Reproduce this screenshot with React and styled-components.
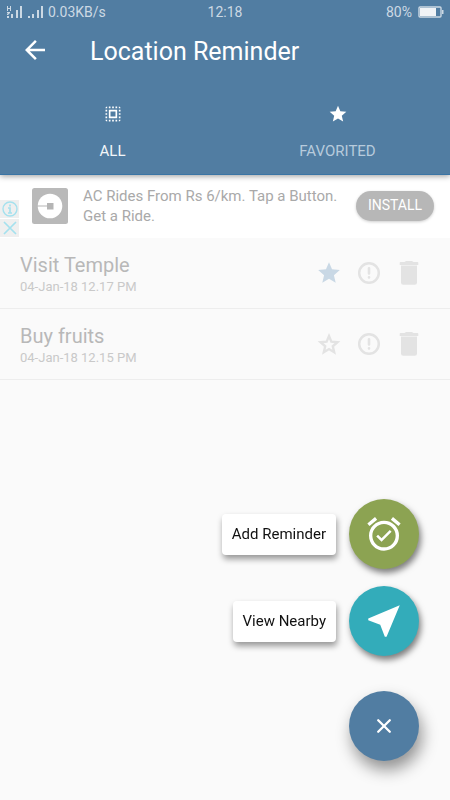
import React from "react";
import styled, { createGlobalStyle } from "styled-components";
import {
  MdArrowBack,
  MdSelectAll,
  MdStar,
  MdAlarmOn,
  MdNearMe,
} from "react-icons/md";

const Global = createGlobalStyle`
  *, *::before, *::after { box-sizing: border-box; }
  body { margin: 0; background: #fafafa; font-family: Roboto, "Noto Sans", sans-serif; }
  button { font: inherit; border: 0; padding: 0; background: none; cursor: pointer; }
  h1, h2, p, ul { margin: 0; padding: 0; font-weight: 400; }
  svg { display: block; flex: none; }
`;

const Screen = styled.div`
  min-height: 100vh;
  background: #fafafa;
`;

const Header = styled.header`
  position: relative;
  background: #517da2;
  border-bottom: 1px solid #3a75a5;
  box-shadow: 0 1px 6px rgba(0, 0, 0, 0.4);
`;

const StatusBar = styled.div`
  display: grid;
  grid-template-columns: 1fr auto 1fr;
  align-items: center;
  height: 24px;
  padding: 0 6px;
  font-size: 14px;
  line-height: 24px;
  color: #ccd9e4;
`;

const StatusGroup = styled.div`
  display: flex;
  align-items: center;
  justify-content: ${(p) => (p.$end ? "flex-end" : "flex-start")};
  gap: ${(p) => (p.$end ? "6px" : "4px")};
`;

const TitleBar = styled.div`
  display: flex;
  align-items: center;
  gap: 40px;
  height: 52px;
  padding: 0 20px;
  color: #fff;
`;

const BackButton = styled.button`
  color: #fff;
`;

const Title = styled.h1`
  padding-top: 3px;
  font-size: 25px;
  line-height: 32px;
`;

const Tabs = styled.nav`
  display: grid;
  grid-template-columns: 1fr 1fr;
`;

const Tab = styled.button`
  display: flex;
  flex-direction: column;
  align-items: center;
  gap: 17px;
  height: 98px;
  color: ${(p) => (p.$active ? "#f2f6f9" : "#b7cbdc")};
  && {
    padding-top: 28px;
    font-size: 15px;
    line-height: 20px;
  }
  svg { color: #fff; }
`;

const Ad = styled.section`
  display: flex;
  height: 63px;
  background: #fff;
`;

const AdMarks = styled.div`
  display: flex;
  flex-direction: column;
  justify-content: flex-end;
  gap: 1px;
  width: 19px;
  padding-bottom: 1px;
`;

const AdMark = styled.button`
  display: grid;
  place-items: center;
  height: 18px;
  && { background: #efefef; }
`;

const AdBody = styled.div`
  display: flex;
  flex: 1;
  align-items: flex-start;
  padding: 11px 16px 0 13px;
`;

const AdText = styled.p`
  flex: 1;
  margin-left: 15px;
  font-size: 15px;
  line-height: 20px;
  color: #a9a9a9;
`;

const InstallButton = styled.button`
  && {
    width: 78px;
    height: 30px;
    margin-top: 5px;
    border-radius: 15px;
    background: #b7b7b7;
    color: #fff;
    font-size: 14px;
    line-height: 28px;
    box-shadow: 0 1px 3px rgba(0, 0, 0, 0.2);
    padding-bottom: 2px;
  }
`;

const AppLogo = styled.svg`
  margin-top: 2px;
`;

const Reminders = styled.ul`
  list-style: none;
`;

const Reminder = styled.li`
  display: flex;
  align-items: center;
  justify-content: space-between;
  height: 71px;
  padding: 0 28px 0 20px;
  border-bottom: 1px solid #ededed;
`;

const ReminderText = styled.div`
  padding-top: 3px;
`;

const ReminderName = styled.h2`
  font-size: 20px;
  line-height: 24px;
  color: #b8b8b8;
`;

const ReminderTime = styled.p`
  font-size: 13px;
  line-height: 20px;
  color: #c9c9c9;
`;

const Actions = styled.div`
  display: flex;
  gap: 14px;
`;

const IconButton = styled.button`
  display: grid;
  place-items: center;
  width: 26px;
  height: 26px;
  color: ${(p) => (p.$on ? "#c9d8e5" : "#e3e3e3")};
`;

const SpeedDial = styled.div`
  position: fixed;
  right: 31px;
  bottom: 39px;
  display: flex;
  flex-direction: column;
  align-items: flex-end;
  gap: 17px;
`;

const DialItem = styled.div`
  display: flex;
  align-items: center;
  gap: 13px;
`;

const DialLabel = styled.label`
  padding: 10px;
  border-radius: 4px;
  background: #fff;
  color: #111;
  font-size: 15px;
  line-height: 21px;
  cursor: pointer;
  box-shadow: 1px 4px 6px rgba(0, 0, 0, 0.4);
`;

const Fab = styled.button`
  && {
    display: grid;
    place-items: center;
    width: 70px;
    height: 70px;
    border-radius: 50%;
    color: #fff;
    background: ${(p) => p.$color};
    margin-top: ${(p) => (p.$main ? "18px" : "0")};
    box-shadow: ${(p) =>
      p.$main ? "3px 9px 16px rgba(0, 0, 0, 0.42)" : "2px 4px 6px rgba(0, 0, 0, 0.5)"};
  }
`;

function SignalIcon({ network }) {
  return (
    <svg width="17" height="14" viewBox="0 0 17 14" fill="currentColor" aria-hidden="true">
      {network && <path d="M1 1h1v2h2V1h1v5H4V4H2v2H1zM1 7h3v1l-2 2H1V9l1-1H1z" />}
      <path d="M1 11h2v2H1zM5 9h2v4H5zM10 5h2v8h-2zM14 1h2v12h-2z" />
    </svg>
  );
}

function BatteryIcon() {
  return (
    <svg width="26" height="12" viewBox="0 0 26 12" aria-hidden="true">
      <rect x="1" y="1" width="22" height="10" rx="1" fill="none" stroke="#ccd9e4" strokeWidth="1.4" />
      <path d="M2 2h16v8H2z" fill="#f0f3f6" />
      <path d="M24 4h1.5v4H24z" fill="#ccd9e4" />
    </svg>
  );
}

function OutlineStarIcon() {
  return (
    <svg width="26" height="26" viewBox="0 0 24 24" fill="none" stroke="currentColor" strokeWidth="2.2" aria-hidden="true">
      <path d="M12 4.6l2.2 5.3 5.6.5-4.300 3.700 1.300 5.500-4.800-2.900-4.800 2.900 1.300-5.500-4.300-3.700 5.600-.5z" />
    </svg>
  );
}

function AlertIcon() {
  return (
    <svg width="24" height="24" viewBox="0 0 24 24" fill="none" stroke="currentColor" strokeLinecap="round" aria-hidden="true">
      <circle cx="12" cy="12" r="9.8" strokeWidth="2.5" />
      <path d="M12 7.3v5.2M12 16.3v.1" strokeWidth="2.6" />
    </svg>
  );
}

function TrashIcon() {
  return (
    <svg width="20" height="26" viewBox="0 0 20 26" fill="currentColor" aria-hidden="true">
      <path d="M1.5 2H5.5L7 1h6l1.5 1h4a.8.8 0 0 1 .8.8V5H.7V2.8A.8.8 0 0 1 1.5 2z" />
      <path d="M2 5.6h16v16.9a2.3 2.3 0 0 1-2.3 2.3H4.3A2.3 2.3 0 0 1 2 22.5z" />
    </svg>
  );
}

function CloseIcon() {
  return (
    <svg width="16" height="16" viewBox="0 0 16 16" fill="none" stroke="currentColor" strokeWidth="2.3" strokeLinecap="round" aria-hidden="true">
      <path d="M2.2 2.2l11.6 11.6M13.8 2.2L2.2 13.8" />
    </svg>
  );
}

const reminders = [
  { name: "Visit Temple", time: "04-Jan-18 12.17 PM", favorite: true },
  { name: "Buy fruits", time: "04-Jan-18 12.15 PM", favorite: false },
];

export default function App() {
  return (
    <Screen>
      <Global />
      <Header>
        <StatusBar>
          <StatusGroup>
            <SignalIcon network />
            <SignalIcon />
            <span>0.03KB/s</span>
          </StatusGroup>
          <span>12:18</span>
          <StatusGroup $end>
            <span>80%</span>
            <BatteryIcon />
          </StatusGroup>
        </StatusBar>
        <TitleBar>
          <BackButton aria-label="Back">
            <MdArrowBack size={30} />
          </BackButton>
          <Title>Location Reminder</Title>
        </TitleBar>
        <Tabs>
          <Tab $active>
            <MdSelectAll size={20} />
            ALL
          </Tab>
          <Tab>
            <MdStar size={20} />
            FAVORITED
          </Tab>
        </Tabs>
      </Header>

      <Ad>
        <AdMarks>
          <AdMark aria-label="Ad information">
            <svg width="16" height="16" viewBox="0 0 16 16" fill="none" stroke="#a5e1ee" strokeWidth="1.4">
              <circle cx="8" cy="8" r="7" />
              <path d="M6 7h2v5M6 12h4M8 3.5v2" strokeWidth="1.7" />
            </svg>
          </AdMark>
          <AdMark aria-label="Close ad">
            <svg width="14" height="14" viewBox="0 0 14 14" fill="none" stroke="#a5e1ee" strokeWidth="1.7">
              <path d="M1 1l12 12M13 1L1 13" />
            </svg>
          </AdMark>
        </AdMarks>
        <AdBody>
          <AppLogo width="36" height="36" viewBox="0 0 36 36" aria-hidden="true">
            <rect width="36" height="36" rx="2.5" fill="#b9b9b9" />
            <circle cx="18" cy="18" r="12.3" fill="#fff" />
            <path d="M5 17.5h10V15h6.5v6.5H15v-3H5z" fill="#b5b5b5" />
          </AppLogo>
          <AdText>
            AC Rides From Rs 6/km. Tap a Button.
            <br />
            Get a Ride.
          </AdText>
          <InstallButton>INSTALL</InstallButton>
        </AdBody>
      </Ad>

      <Reminders>
        {reminders.map((r) => (
          <Reminder key={r.name}>
            <ReminderText>
              <ReminderName>{r.name}</ReminderName>
              <ReminderTime>{r.time}</ReminderTime>
            </ReminderText>
            <Actions>
              <IconButton $on={r.favorite} aria-label="Favorite">
                {r.favorite ? <MdStar size={26} /> : <OutlineStarIcon />}
              </IconButton>
              <IconButton aria-label="Alert">
                <AlertIcon />
              </IconButton>
              <IconButton aria-label="Delete">
                <TrashIcon />
              </IconButton>
            </Actions>
          </Reminder>
        ))}
      </Reminders>

      <SpeedDial>
        <DialItem>
          <DialLabel htmlFor="add-reminder">Add Reminder</DialLabel>
          <Fab id="add-reminder" $color="#8ca352">
            <MdAlarmOn size={40} />
          </Fab>
        </DialItem>
        <DialItem>
          <DialLabel htmlFor="view-nearby">View Nearby</DialLabel>
          <Fab id="view-nearby" $color="#33acba">
            <MdNearMe size={42} />
          </Fab>
        </DialItem>
        <Fab $main $color="#517da2" aria-label="Close menu">
          <CloseIcon />
        </Fab>
      </SpeedDial>
    </Screen>
  );
}
